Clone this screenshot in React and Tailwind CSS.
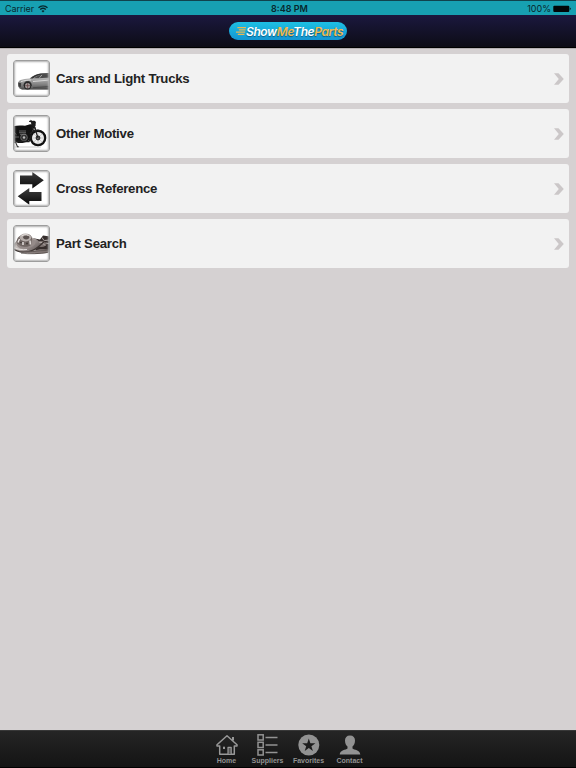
import React from "react";

const CarPicture = () => (
    <svg viewBox="0 0 37 37" className="w-[37px] h-[37px]">
        <defs>
            <linearGradient id="carBody" x1="0" y1="0" x2="0" y2="1">
                <stop offset="0" stopColor="#777" />
                <stop offset="0.35" stopColor="#b0b0b0" />
                <stop offset="0.7" stopColor="#858585" />
                <stop offset="1" stopColor="#555" />
            </linearGradient>
        </defs>
        <path d="M6 28.200h31v1.300H9z" fill="#161616" />
        <path d="M5 25c-.3-2.300.5-4.300 2.500-5 2.500-.8 5.500-1.200 9-1.500C19.500 16.300 23.500 14 28 13.600L37 13.200v15.100L19 28.800l-12-.6C5.700 27.700 5.100 26.500 5 25z" fill="url(#carBody)" />
        <path d="M17 18.500c3.500-2.800 7-4.600 11-4.900l9-.4v1.200l-9 .4c-3 .3-5.500 1.800-8 3.700z" fill="#333" />
        <path d="M21 18.300c2.500-1.800 4.700-3 7.500-3.200l8.500-.3v2.600c-6 .2-10 .9-16 .9z" fill="#4b4b4b" />
        <path d="M26.500 17.800l2.500-2.900" stroke="#bbb" strokeWidth="0.800" />
        <path d="M8 21.700c3-1.300 7-1.700 10-1.700M20 21.500l17-1.500" stroke="#dedede" strokeWidth="0.900" fill="none" />
        <path d="M5.200 22.500l3 .7-.5 4-2-.7z" fill="#3c3c3c" />
        <path d="M10.500 26c-.2-3 1.800-5 4.200-5s4.300 2 4.100 5z" fill="#3a3a3a" />
        <circle cx="14.600" cy="25.700" r="3.700" fill="#262626" />
        <circle cx="14.600" cy="25.700" r="2.600" fill="#a29a9a" />
        <path d="M14.600 23.200v5M12.200 25.700h4.800" stroke="#664646" strokeWidth="0.800" />
        <path d="M20 27.700l17-1.200" stroke="#444" strokeWidth="0.800" />
    </svg>
);

const MotorcyclePicture = () => (
    <svg viewBox="0 0 37 37" className="w-[37px] h-[37px]">
        <path d="M0 32h28" stroke="#c8c8c8" strokeWidth="1" />
        <path d="M0 11.300c4-1 8-1 12-.5l5-1.500c2-.2 4 .9 4.300 2.900l-2 4.300-1.500 5.500-2.800 4.500-5.500 1.500H5L0 25z" fill="#121212" />
        <path d="M16 6.300l4 .8M17.500 5.200l3 2.800 1.300 3" stroke="#1c1c1c" strokeWidth="1.100" fill="none" />
        <path d="M18 7c1-1.700 4.500-1.500 4.800.3l-.3 3.800-4 .7z" fill="#1c1c1c" />
        <path d="M21 10l4.400 13.500M19 12l4.700 11.500" stroke="#202020" strokeWidth="1.300" />
        <circle cx="25" cy="23" r="7.200" fill="#eeeeee" stroke="#101010" strokeWidth="2.300" />
        <path d="M25 17v12.600M18.700 23h12.600M20.500 18.500l9 9M20.500 27.500l9-9" stroke="#999" strokeWidth="0.400" />
        <circle cx="25" cy="23" r="2.400" fill="#333" />
        <circle cx="24.800" cy="22.800" r="0.900" fill="#999" />
        <path d="M21.500 12l3.500 11" stroke="#222" strokeWidth="1.200" />
        <path d="M17 19c2-3.200 6.500-4.700 11-3.200" stroke="#222" strokeWidth="1.200" fill="none" />
        <circle cx="11" cy="22.500" r="3.400" fill="#333" stroke="#777" strokeWidth="0.700" />
        <circle cx="11" cy="22.500" r="1.200" fill="#bbb" />
        <path d="M6 16h7M6 17.700h7M7 19.300h6M2 22h4" stroke="#888" strokeWidth="0.700" />
        <path d="M0 27.500l5-1.200 11 .3 2.500-7" stroke="#1c1c1c" strokeWidth="1.400" fill="none" />
        <path d="M2 26l2.500 5.800h1.300" stroke="#333" strokeWidth="1.100" fill="none" />
        <path d="M1 17.500c1.500.5 2.200 1.500 2.200 2.800" stroke="#666" strokeWidth="0.800" fill="none" />
    </svg>
);

const ArrowsPicture = () => (
    <svg viewBox="0 0 37 37" className="w-[37px] h-[37px]">
        <defs>
            <linearGradient id="arrowFill" x1="0" y1="0" x2="0" y2="1">
                <stop offset="0" stopColor="#404040" />
                <stop offset="1" stopColor="#080808" />
            </linearGradient>
        </defs>
        <path d="M7 5.600h12.300V1.900L30.800 10.200 19.300 18.500v-4.200H7z" fill="url(#arrowFill)" />
        <path d="M28.500 21.900H16.300v-4L4.700 26.200l11.600 8.500V31h12.200z" fill="url(#arrowFill)" />
    </svg>
);

const BrakePicture = () => (
    <svg viewBox="0 0 37 37" className="w-[37px] h-[37px]">
        <defs>
            <linearGradient id="disc" x1="0" y1="0" x2="1" y2="1">
                <stop offset="0" stopColor="#574f4d" />
                <stop offset="0.3" stopColor="#c9c2bf" />
                <stop offset="0.6" stopColor="#948b89" />
                <stop offset="1" stopColor="#5a5150" />
            </linearGradient>
        </defs>
        <path d="M19 13l8 1.500 3-4 7 1v15l-10 1-9-6z" fill="#352d2c" />
        <ellipse cx="28.500" cy="19" rx="5" ry="3" fill="#7c7270" />
        <path d="M24 17l5 .5 3 3M29 12.500l2 3 6-.5M33 18l4 1" stroke="#b5adab" strokeWidth="1" fill="none" />
        <ellipse cx="13.500" cy="20" rx="13" ry="7.600" fill="url(#disc)" transform="rotate(-8 13.500 20)" />
        <ellipse cx="13" cy="18.500" rx="9.500" ry="5" fill="#958b89" transform="rotate(-8 13 18.500)" />
        <path d="M3.500 17c0-4 3.500-7.500 8.500-8 4.500-.3 7 1.500 7 4.500l-1 6.500c-3 3-12 2.500-14.500-3z" fill="#6f6562" />
        <ellipse cx="12.500" cy="12.500" rx="5.800" ry="3.900" fill="#b5adaa" />
        <ellipse cx="13.200" cy="12.300" rx="3" ry="2.100" fill="#5a514f" />
        <path d="M8.500 11c1.500-1.400 5-1.800 7-.5" stroke="#eeeae8" strokeWidth="0.900" fill="none" />
        <path d="M5 17.500l1.500-3.500M17 15.500l.3 4M10 17v3" stroke="#ece7e5" strokeWidth="1.400" />
        <circle cx="8" cy="17.500" r="0.800" fill="#3c3432" />
        <circle cx="14" cy="18.500" r="0.900" fill="#3c3432" />
        <path d="M0 23.500c6 5.500 18 4.500 25-1.500l7-6" stroke="#3d3533" strokeWidth="1.300" fill="none" />
        <path d="M6 26c9 1.500 15-.7 21-1.700 4-.4 7 0 10 .7v2.300c-7 2-14 2-21 1.200-4-.3-8-.7-10-2.500z" fill="#867c7a" />
        <path d="M6 26.500c9 1.500 17-1.500 31-.7M8 28.200c9 1 18 .6 27-.8" stroke="#4b4341" strokeWidth="0.700" fill="none" />
        <path d="M1 22.500c4 2 8 2.500 13 2" stroke="#e8e3e1" strokeWidth="0.900" fill="none" />
    </svg>
);

const categories = [
    { label: "Cars and Light Trucks", Picture: CarPicture },
    { label: "Other Motive", Picture: MotorcyclePicture },
    { label: "Cross Reference", Picture: ArrowsPicture },
    { label: "Part Search", Picture: BrakePicture },
];

const HomeIcon = () => (
    <svg viewBox="0 0 22 22" className="w-[22px] h-[22px]" fill="none" stroke="#989898" strokeWidth="1.500" strokeLinejoin="round">
        <path d="M11 1.700L1 10.700v1.300h2.700v8.300h14.600V12H21v-1.300z" />
        <path d="M17 3v3.500" strokeWidth="2" />
        <path d="M12 20v-6.700h3.200V20" strokeWidth="1.200" fill="#555555" />
        <rect x="7" y="12.700" width="2" height="2.300" fill="#989898" stroke="none" />
    </svg>
);

const SuppliersIcon = () => (
    <svg viewBox="0 0 22 22" className="w-[22px] h-[22px]" fill="none" stroke="#939393" strokeWidth="1.500">
        <rect x="1" y="0.800" width="5.200" height="5.200" />
        <rect x="1" y="8.300" width="5.200" height="5.200" />
        <rect x="1" y="15.800" width="5.200" height="5.200" />
        <path d="M8.500 3.500h12M8.500 11h12M8.500 18.500h12" strokeWidth="1.300" />
    </svg>
);

const FavoritesIcon = () => (
    <svg viewBox="0 0 22 22" className="w-[22px] h-[22px]">
        <circle cx="10.800" cy="11" r="10.500" fill="#929292" />
        <path d="M10.800 4.500l1.600 4.700h5l-4 3 1.500 4.700-4.100-2.900-4.100 2.900 1.500-4.700-4-3h5z" fill="#1c1c1c" />
    </svg>
);

const ContactIcon = () => (
    <svg viewBox="0 0 22 22" className="w-[22px] h-[22px]" fill="#929292">
        <path d="M11 1.500c3.300 0 5 2 5 5 0 2.800-1.100 5-2.500 6v2c1.500 1.500 7.500 1.500 7.800 5.900H.7C1 16 7 16 8.500 14.500v-2C7.100 11.500 6 9.300 6 6.500c0-3 1.700-5 5-5z" />
    </svg>
);

const tabs = [
    { label: "Home", Icon: HomeIcon },
    { label: "Suppliers", Icon: SuppliersIcon },
    { label: "Favorites", Icon: FavoritesIcon },
    { label: "Contact", Icon: ContactIcon },
];

const StatusBar = () => (
    <div className="h-[15px] grid grid-cols-3 items-center pt-px px-[5px] bg-[#17a0b2] border-t border-[#10434d] font-['Inter',sans-serif] text-[9px] leading-[13px] text-[#07272d]">
        <div className="flex items-center gap-[4px]">
            <span className="tracking-[-0.05px]">Carrier</span>
            <svg viewBox="0 0 10 8" className="w-[10px] h-[8px]" fill="none" stroke="#07272d" strokeWidth="1.400">
                <path d="M.5 2.700c2.600-2.300 6.400-2.300 9 0M2.200 4.500c1.600-1.400 4-1.400 5.600 0" />
                <path d="M3.500 5.900L5 7.500l1.500-1.600c-.9-.8-2.100-.8-3 0z" fill="#07272d" stroke="none" />
            </svg>
        </div>
        <span className="text-center font-semibold pl-[3px]">8:48 PM</span>
        <div className="flex items-center justify-end gap-[2px]">
            <span>100%</span>
            <svg viewBox="0 0 18 8" className="w-[18px] h-[8px]">
                <rect x="0.300" y="0.700" width="16" height="6.300" rx="1" fill="#010608" />
                <path d="M16.800 2.600c1.300.3 1.300 2.200 0 2.500z" fill="#010608" />
            </svg>
        </div>
    </div>
);

const Logo = () => (
    <div className="w-[118px] h-[18px] rounded-full flex items-center pl-[7px] bg-gradient-to-b from-[#1ebfe3] to-[#1495d1]">
        <svg viewBox="0 0 11 10" className="w-[10px] h-[10px] shrink-0" stroke="#e9b651" strokeWidth="1.300">
            <path d="M1.500 1.200H11M3.200 3.700h7.300M0 6.200h10M2 8.700h7.300" />
        </svg>
        <span className="pt-px font-['Inter',sans-serif] font-semibold italic text-[12px] tracking-[-0.400px] leading-[17px] text-white whitespace-nowrap [text-shadow:0_1px_1px_#0b5c83]">
            Show<span className="text-[#f1b950]">Me</span>The<span className="text-[#f1b950]">Parts</span>
        </span>
    </div>
);

const App = () => {
    return (
        <div className="w-[576px] h-[768px] flex flex-col overflow-hidden bg-[#d5d1d2] font-['Liberation_Sans',sans-serif]">
            <StatusBar />
            <header className="h-[33px] flex items-center justify-center bg-gradient-to-b from-[#1b183f] to-[#0d0c16] border-b border-black">
                <Logo />
            </header>

            <main className="flex-1 flex flex-col gap-[6px] px-[7px] pt-[5px] border-t border-[#b5b0b3]">
                {categories.map(({ label, Picture }) => (
                    <button key={label} className="h-[49px] shrink-0 flex items-center rounded-[3px] bg-[#f2f2f2] pl-[6px] pr-[5px]">
                        <div className="relative w-[37px] h-[37px] shrink-0 rounded-[3px] overflow-hidden bg-white">
                            <Picture />
                            <div className="absolute inset-0 rounded-[3px] border border-[#9d9d9d] shadow-[inset_0_0_2px_1px_#b0b0b0]"></div>
                        </div>
                        <span className="flex-1 pl-[6px] text-left text-[13.200px] leading-[16px] tracking-[-0.240px] font-bold text-[#222222] whitespace-nowrap">{label}</span>
                        <svg viewBox="0 0 10 12" className="w-[10px] h-[12px]" fill="#cbc7c8">
                            <path d="M0 .3h4.500L9.800 6l-5.300 5.700H0L4.800 6z" />
                        </svg>
                    </button>
                ))}
            </main>

            <nav className="h-[38px] flex justify-center pt-[3px] bg-gradient-to-b from-[#252525] to-[#141414] border-t border-[#383838] border-b border-b-black">
                {tabs.map(({ label, Icon }) => (
                    <button key={label} className="w-[41px] flex flex-col items-center">
                        <Icon />
                        <span className="text-[7px] leading-[9px] font-bold text-[#929292] whitespace-nowrap">{label}</span>
                    </button>
                ))}
            </nav>
        </div>
    );
};

export default App;
